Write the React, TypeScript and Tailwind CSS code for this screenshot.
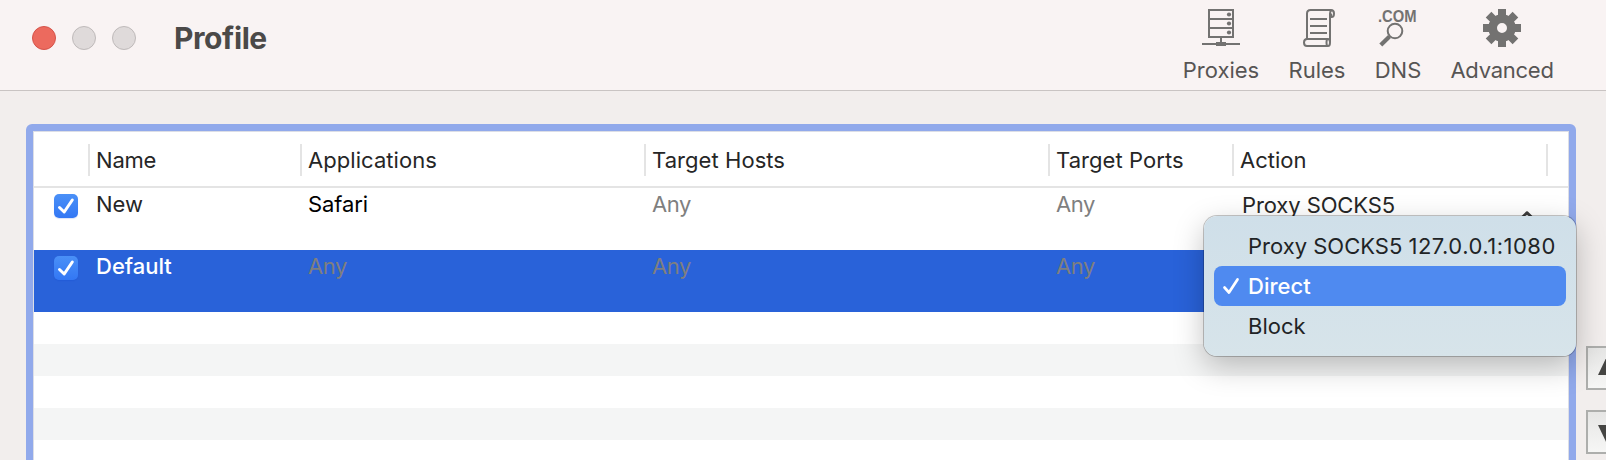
import type { ReactNode } from "react";

const GEAR_ANGLES = [0, 45, 90, 135];

function ServerIcon() {
  return (
    <svg width="38" height="38" viewBox="0 0 38 38" fill="none" stroke="#737271" strokeWidth="2">
      <rect x="7" y="1" width="24" height="27" />
      <path d="M7 10h24M7 19h24M19 29v4" />
      <path d="M0 35h38" />
      <rect x="14" y="33" width="10" height="4" fill="#737271" stroke="none" />
      <g fill="#737271" stroke="none">
        <circle cx="27" cy="5.500" r="2.100" />
        <circle cx="27" cy="14.500" r="2.100" />
        <circle cx="27" cy="23.500" r="2.100" />
      </g>
    </svg>
  );
}

function ScrollIcon() {
  return (
    <svg className="ml-[3px]" width="32" height="38" viewBox="0 0 32 38" fill="none" stroke="#737271" strokeWidth="2">
      <path d="M4 30V4.500Q4 1 7.500 1H28Q31 1 31 4.500Q31 8 28.500 8H28" />
      <path d="M28.500 1.500Q27 2 27 4.500V33" />
      <path d="M25 30H4Q1 30 1 33.500Q1 37 4 37H25Q27 37 27 33.500Q27 30 25 30Q23.500 30 23.500 33.500Q23.500 37 25 37" />
      <path d="M28 4.500Q28 7 29 7" />
      <path d="M7 10h17M7 17h17M7 24h17" />
    </svg>
  );
}

function DnsIcon() {
  return (
    <svg className="overflow-visible" width="40" height="38" viewBox="0 0 40 38" fill="none" stroke="#737271">
      <text
        x="0"
        y="13"
        textLength="38.500"
        lengthAdjust="spacingAndGlyphs"
        fill="#737271"
        stroke="none"
        fontFamily="Liberation Sans, Arial, sans-serif"
        fontSize="16"
        fontWeight="700"
      >
        .COM
      </text>
      <circle cx="17" cy="22" r="7.300" strokeWidth="2" />
      <path d="M11.500 27.500L2.800 36" strokeWidth="4.200" />
    </svg>
  );
}

function GearIcon() {
  return (
    <svg width="38" height="38" viewBox="-19 -19 38 38" fill="#737271">
      <path
        fillRule="evenodd"
        d="M-13.700 0a13.700 13.700 0 1 0 27.400 0a13.700 13.700 0 1 0 -27.400 0M-5 0a5 5 0 1 0 10 0a5 5 0 1 0 -10 0"
      />
      {GEAR_ANGLES.map((a) => (
        <path key={a} transform={`rotate(${a})`} d="M-4-19h8v8h-8zM-4 11h8v8h-8z" />
      ))}
    </svg>
  );
}

function Tool({ label, width, spacing = "", children }: { label: string; width: string; spacing?: string; children: ReactNode }) {
  return (
    <div className={`flex flex-col items-center pt-[9px] ${width}`}>
      {children}
      <span className={`mt-[9px] whitespace-nowrap text-[22px] leading-7 text-[#575554] ${spacing}`}>{label}</span>
    </div>
  );
}

function Checkbox() {
  return (
    <span className="flex size-6 items-center justify-center rounded-[5px] bg-linear-to-b from-[#4a90f7] to-[#3377f4] shadow-[0_1px_1px_rgba(0,60,200,0.15)]">
      <svg width="24" height="24" viewBox="0 0 24 24" fill="none" stroke="white" strokeWidth="3" strokeLinecap="round" strokeLinejoin="round">
        <path d="M5.500 13.500L10.200 18L18.300 6" />
      </svg>
    </span>
  );
}

const COLS = "grid grid-cols-[54px_212px_344px_404px_184px_314px_1fr]";

function HeadCell({ label, spacing = "" }: { label?: string; spacing?: string }) {
  return (
    <div className="mt-3 h-8 border-l-2 border-[#e4e4e4] pl-[6px]">
      <span className={`block whitespace-nowrap text-[22px] leading-8 text-[#262626] ${spacing}`}>{label}</span>
    </div>
  );
}

function Row({ name, nameClass, app, appClass, anyClass, rowClass, action }: {
  name: string;
  nameClass: string;
  app: string;
  appClass: string;
  anyClass: string;
  rowClass: string;
  action?: ReactNode;
}) {
  return (
    <div className={`${COLS} h-[62px] text-[22px] leading-8 ${rowClass}`}>
      <div className="pl-5 pt-[6px]">
        <Checkbox />
      </div>
      <div className={`pl-2 ${nameClass}`}>{name}</div>
      <div className={`pl-2 ${appClass}`}>{app}</div>
      <div className={`pl-2 ${anyClass}`}>Any</div>
      <div className={`pl-2 ${anyClass}`}>Any</div>
      <div>{action}</div>
    </div>
  );
}

function StepButton({ d }: { d: string }) {
  return (
    <button className="flex size-11 shrink-0 items-center justify-center border-2 border-[#adaeac] bg-linear-to-b from-[#e6e6e5] to-[#f6f6f5]">
      <svg width="40" height="40" viewBox="0 0 40 40" fill="#454543">
        <path d={d} />
      </svg>
    </button>
  );
}

export default function App() {
  return (
    <div className="relative h-[460px] w-[1606px] overflow-hidden bg-[#f2eeed] font-['Inter',sans-serif]">
      <header className="flex h-[91px] justify-between border-b border-[#c9c4c3] bg-[#f9f3f3] pl-8 pr-[53px]">
        <div className="flex h-[76px] items-center">
          <div className="flex gap-4">
            <span className="size-6 rounded-full border border-[#d5534a] bg-[#ec6a5e]" />
            <span className="size-6 rounded-full border border-[#bfbaba] bg-[#dfdada]" />
            <span className="size-6 rounded-full border border-[#bfbaba] bg-[#dfdada]" />
          </div>
          <h1 className="ml-[38px] text-[30px] font-bold leading-9 tracking-[-0.4px] text-[#4b4948]">Profile</h1>
        </div>
        <nav className="flex gap-[30px]">
          <Tool label="Proxies" width="w-[76px]"><ServerIcon /></Tool>
          <Tool label="Rules" width="w-[56px]"><ScrollIcon /></Tool>
          <Tool label="DNS" width="w-[46px]"><DnsIcon /></Tool>
          <Tool label="Advanced" width="w-[102px]" spacing="tracking-[-0.25px]"><GearIcon /></Tool>
        </nav>
      </header>

      <main className="flex pl-[26px] pt-[33px]">
        <section className="h-[360px] w-[1550px] shrink-0 rounded-t-[6px] border-[7px] border-[#91a9eb]">
          <div className="h-[360px] border border-[#dcdee6] bg-white">
            <div className={`${COLS} h-14 border-b-2 border-[#e4e4e4]`}>
              <div />
              <HeadCell label="Name" spacing="tracking-[-0.2px]" />
              <HeadCell label="Applications" spacing="tracking-[0.06px]" />
              <HeadCell label="Target Hosts" spacing="tracking-[0.06px]" />
              <HeadCell label="Target Ports" spacing="tracking-[0.06px]" />
              <HeadCell label="Action" />
              <HeadCell />
            </div>
            <Row
              name="New"
              nameClass="text-[#262626]"
              app="Safari"
              appClass="text-black tracking-[-0.1px]"
              anyClass="text-[#7f7f7f] tracking-[-0.4px]"
              rowClass="bg-white"
              action={
                <div className="flex items-start justify-between pl-[10px] pr-[13px] pt-px text-[#262626]">
                  <span className="tracking-[-0.1px]">Proxy SOCKS5</span>
                  <svg className="mt-[22px]" width="12" height="10" viewBox="0 0 12 10" fill="none" stroke="#3c3c3c" strokeWidth="2.500" strokeLinecap="round" strokeLinejoin="round">
                    <path d="M1.500 6L6 1.500L10.500 6" />
                  </svg>
                </div>
              }
            />
            <Row
              name="Default"
              nameClass="text-white font-medium"
              app="Any"
              appClass="text-[#7f7f7f] tracking-[-0.4px]"
              anyClass="text-[#7f7f7f] tracking-[-0.4px]"
              rowClass="bg-[#2962d9]"
            />
            <div className="h-8 bg-white" />
            <div className="h-8 bg-[#f4f5f5]" />
            <div className="h-8 bg-white" />
            <div className="h-8 bg-[#f4f5f5]" />
          </div>
        </section>
        <aside className="ml-[10px] flex flex-col gap-5 pt-[222px]">
          <StepButton d="M19.500 7L29 27H10Z" />
          <StepButton d="M19.500 33L10 13H29Z" />
        </aside>
      </main>

      <div className="absolute left-[1204px] top-[216px] h-[140px] w-[372px] rounded-[13px] bg-linear-to-b from-[#cfdfe9] to-[#d7e4ea] p-[10px] text-[22px] leading-10 text-[#1f2426] shadow-[0_0_0_1px_rgba(0,0,0,0.22),0_10px_30px_rgba(0,0,0,0.25)]">
        <div className="h-10 whitespace-nowrap pl-[34px]">
          Proxy SOCKS5 <span className="tracking-[0.5px]">127.0.0.1:1080</span>
        </div>
        <div className="flex h-10 items-center rounded-lg bg-[#4f8af0] pl-2 font-medium text-white">
          <svg className="mr-[8px]" width="18" height="18" viewBox="0 0 18 18" fill="none" stroke="white" strokeWidth="2.700" strokeLinecap="round" strokeLinejoin="round">
            <path d="M2.500 10.500L7 15.500L15.500 2.500" />
          </svg>
          <span>Direct</span>
        </div>
        <div className="h-10 pl-[34px]">Block</div>
      </div>
    </div>
  );
}
